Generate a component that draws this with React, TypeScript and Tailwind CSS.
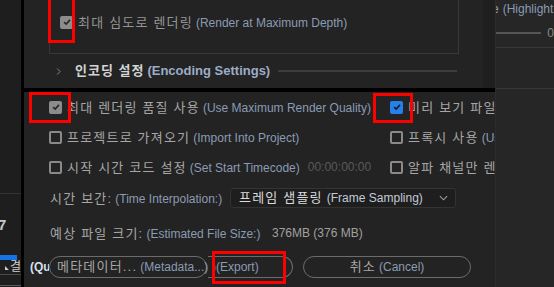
import React from "react";

const KR = "text-[13px] tracking-[1.2px]";

// 체크박스: gray = 비활성 체크, blue = 활성 체크, off = 빈 상자
function Check({ state }: { state: "gray" | "blue" | "off" }) {
  if (state === "off") {
    return <span className="block w-[13px] h-[13px] shrink-0 rounded-[2px] border-2 border-[#8a8a8a]" />;
  }
  return (
    <span
      className={`flex items-center justify-center w-[13px] h-[13px] shrink-0 rounded-[2px] ${
        state === "blue" ? "bg-[#2680eb]" : "bg-[#8c8c8c]"
      }`}
    >
      <svg viewBox="0 0 12 12" className="w-[10px] h-[10px]">
        <path d="M2.5 6.2 L5 8.6 L9.6 3.4" fill="none" stroke={state === "blue" ? "#16202c" : "#2a2a2a"} strokeWidth="2" />
      </svg>
    </span>
  );
}

function Label({ kr, en, dim }: { kr: string; en: string; dim?: boolean }) {
  return (
    <span className="whitespace-nowrap leading-none">
      <span className={`${KR} ${dim ? "text-[#959595]" : "text-[#a6a6a6]"}`}>{kr}</span>
      <span className="ml-[3px] text-[12px] text-[#8a9bb3]">({en})</span>
    </span>
  );
}

function CheckRow({ state, kr, en, extra }: { state: "gray" | "blue" | "off"; kr: string; en: string; extra?: string }) {
  return (
    <div className="flex items-center gap-[5px] h-[30px] whitespace-nowrap">
      <Check state={state} />
      <Label kr={kr} en={en} />
      {extra && <span className="ml-[3px] text-[12px] text-[#5a5a5a]">{extra}</span>}
    </div>
  );
}

export default function App() {
  return (
    <div className="relative flex w-[554px] h-[287px] overflow-hidden bg-[#232323] font-['Liberation_Sans','Noto_Sans_CJK_KR',sans-serif]">
      {/* 왼쪽 패널 조각 */}
      <div className="w-[21px] shrink-0 bg-[#1e1e1e] flex flex-col overflow-hidden">
        <div className="h-[194px] border-b border-[#343434]" />
        <div className="mt-[23px] -ml-[2px] text-[15px] font-bold leading-none text-[#c8c8c8]">7</div>
        <div className="mt-[23px] w-[17px] h-[5px] bg-[#1473e6]" />
        <div className="mt-[3px] flex items-end h-[12px] gap-[1px] border-b border-[#4a4a4a] pb-[1px]">
          <svg viewBox="0 0 10 10" className="ml-[5px] w-[10px] h-[10px]">
            <path d="M0 10 L0 0 L10 10 Z" fill="#d0d0d0" />
          </svg>
          <span className="text-[12px] leading-none text-[#d0d0d0]">결</span>
        </div>
        <div className="mt-[10px] border-b border-[#5a5a5a]" />
      </div>
      <div className="w-[3px] shrink-0 bg-black" />

      {/* 메인 다이얼로그 */}
      <div className="w-[471px] shrink-0 flex flex-col overflow-hidden">
        <div className="h-[88px] flex">
          <div className="flex-1 flex flex-col">
            <div className="ml-[25px] w-[410px] h-[55px] border-x border-b border-[#383838] pl-[10px] pt-[14px]">
              <div className="flex items-center gap-[5px]">
                <Check state="gray" />
                <Label kr="최대 심도로 렌더링" en="Render at Maximum Depth" dim />
              </div>
            </div>
            <div className="flex items-center h-[34px] pl-[32px]">
              <svg viewBox="0 0 8 10" className="w-[6px] h-[9px]">
                <path d="M1.5 1 L5.5 5 L1.5 9" fill="none" stroke="#8a8a8a" strokeWidth="1.3" />
              </svg>
              <span className="ml-[13px] text-[13px] tracking-[1px] font-bold text-[#d4d4d4] whitespace-nowrap">인코딩 설정</span>
              <span className="ml-[3px] text-[13px] font-bold text-[#9cadc8] whitespace-nowrap">(Encoding Settings)</span>
              <div className="ml-[8px] w-[179px] shrink-0 h-[2px] bg-[#3c3c3c]" />
            </div>
          </div>
          <div className="w-[12px] bg-[#1f1f1f]" />
        </div>
        <div className="h-[4px] bg-black" />

        <div className="flex-1 pl-[25px]">
          <div className="grid grid-cols-[341px_1fr]">
            <div>
              <CheckRow state="gray" kr="최대 렌더링 품질 사용" en="Use Maximum Render Quality" />
              <CheckRow state="off" kr="프로젝트로 가져오기" en="Import Into Project" />
              <CheckRow state="off" kr="시작 시간 코드 설정" en="Set Start Timecode" extra="00:00:00:00" />
            </div>
            <div className="overflow-hidden">
              <CheckRow state="blue" kr="미리 보기 파일 사용" en="Use Previews" />
              <CheckRow state="off" kr="프록시 사용" en="Use Proxies" />
              <CheckRow state="off" kr="알파 채널만 렌더링" en="Render Alpha Channel Only" />
            </div>
          </div>

          <div className="flex items-center h-[32px] pl-[1px]">
            <div className="w-[180px] shrink-0 overflow-hidden">
              <Label kr="시간 보간:" en="Time Interpolation:" />
            </div>
            <div className="flex items-center w-[226px] h-[20px] rounded-[3px] border border-[#333333] bg-[#1e1e1e] pl-[8px] pr-[7px]">
              <span className={`${KR} text-[#dcdcdc] whitespace-nowrap`}>프레임 샘플링</span>
              <span className="ml-[4px] text-[12px] text-[#c2cad8] whitespace-nowrap">(Frame Sampling)</span>
              <svg viewBox="0 0 10 6" className="ml-auto w-[9px] h-[6px]">
                <path d="M1 1 L5 5 L9 1" fill="none" stroke="#a0a0a0" strokeWidth="1.2" />
              </svg>
            </div>
          </div>

          <div className="flex items-center h-[38px] pl-[1px]">
            <div className="w-[222px] shrink-0 overflow-hidden">
              <Label kr="예상 파일 크기:" en="Estimated File Size:" />
            </div>
            <span className="text-[12px] text-[#a0a0a0] whitespace-nowrap">376MB (376 MB)</span>
          </div>

          <div className="mt-[4px] flex items-center -ml-[19px]">
            <span className="w-[19px] shrink-0 overflow-hidden text-[12px] font-bold text-[#d8e0f0] whitespace-nowrap">(Qu</span>
            <div className="flex items-center w-[158px] h-[22px] rounded-full border-[1.5px] border-[#6b6b6b] pl-[7px]">
              <span className={`${KR} text-[#a6a6a6] whitespace-nowrap`}>메타데이터...</span>
              <span className="ml-[3px] text-[12px] text-[#8a9bb3] whitespace-nowrap">(Metadata...)</span>
            </div>
            <div className="ml-[1px] flex items-center w-[85px] h-[22px] rounded-r-full border-[1.5px] border-l-0 border-[#6b6b6b] pl-[4px]">
              <span className="text-[12px] text-[#8a9bb3] whitespace-nowrap">)(Export)</span>
            </div>
            <div className="ml-[10px] flex items-center justify-center w-[168px] h-[22px] rounded-full border-[1.5px] border-[#6b6b6b]">
              <span className={`${KR} text-[#a6a6a6]`}>취소</span>
              <span className="ml-[3px] text-[12px] text-[#8a9bb3]">(Cancel)</span>
            </div>
          </div>
        </div>
      </div>

      {/* 오른쪽 패널 조각 */}
      <div className="flex-1 bg-[#262626] border-l border-[#2c2c2c] flex flex-col overflow-hidden">
        <div className="h-[18px] -ml-[4px] flex items-center whitespace-nowrap">
          <span className="text-[12px] text-[#a2a2a2]">e</span>
          <span className="ml-[4px] text-[12px] text-[#8a9bb3]">(Highlight Color)</span>
        </div>
        <div className="mt-[8px] h-[14px] flex items-center">
          <div className="w-[47px] h-[2px] bg-[#555555]" />
          <span className="ml-[6px] text-[12px] text-[#8a8a8a]">0</span>
        </div>
        <div className="mt-[7px] border-b border-[#383838]" />
        <div className="mt-[40px] border-b border-[#383838]" />
      </div>

      {/* 빨간 주석 상자 */}
      <div className="absolute left-[48px] top-[-5px] w-[27px] h-[48px] border-[3px] border-[#ff0000]" />
      <div className="absolute left-[29px] top-[92px] w-[42px] h-[31px] border-[3px] border-[#ff0000]" />
      <div className="absolute left-[373px] top-[93px] w-[40px] h-[30px] border-[3px] border-[#ff0000]" />
      <div className="absolute left-[212px] top-[251px] w-[74px] h-[33px] border-[3px] border-[#ff0000]" />
    </div>
  );
}
